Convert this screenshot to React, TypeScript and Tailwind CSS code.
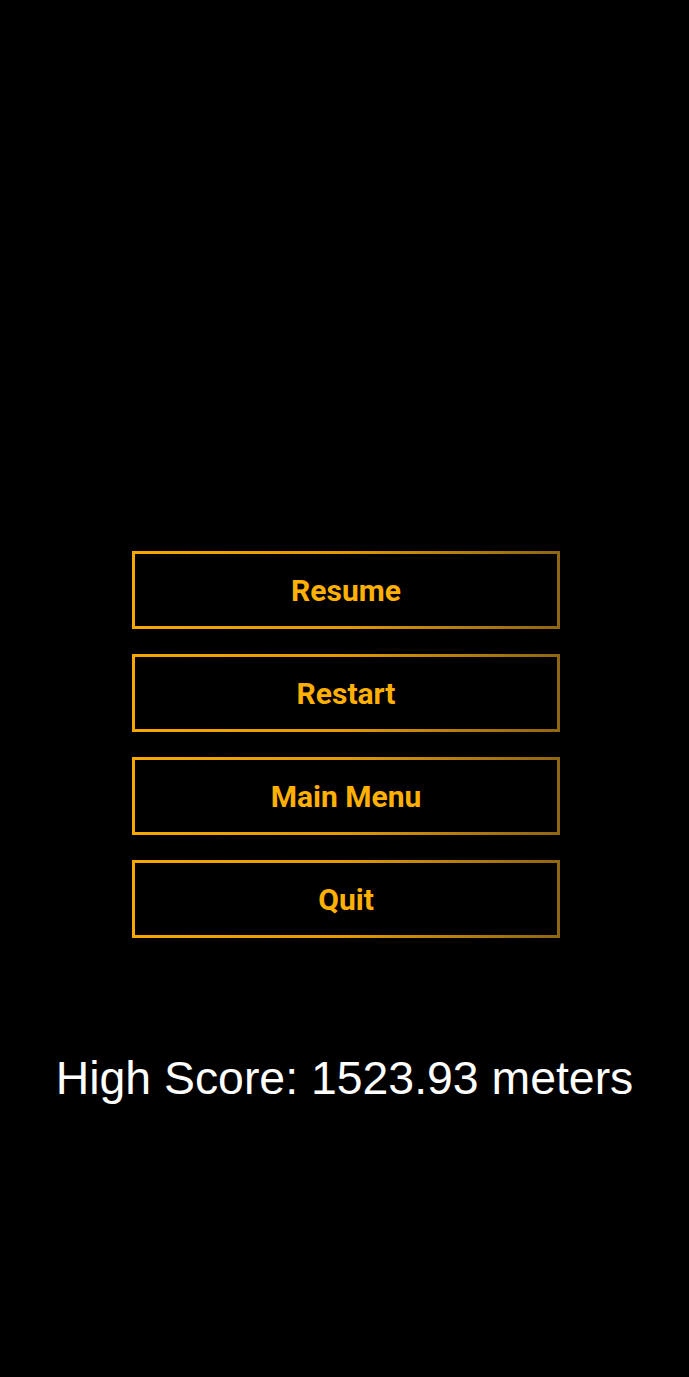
const items = ["Resume", "Restart", "Main Menu", "Quit"];

const MenuButton = ({ label }: { label: string }) => (
  <div className="w-[428px] h-[78px] p-[3px] bg-gradient-to-r from-[#f7a800] via-[#e39a00] to-[#8f6612]">
    <button className="w-full h-full bg-black flex items-center justify-center text-[30px] font-bold text-[#ffb000] [font-family:Roboto,sans-serif]">
      {label}
    </button>
  </div>
);

export default function App() {
  return (
    <div className="min-h-[1377px] w-full bg-black flex flex-col items-center pt-[551px]">
      <div className="flex flex-col gap-[25px] ml-[3px]">
        {items.map((item) => (
          <MenuButton key={item} label={item} />
        ))}
      </div>
      <p className="mt-[117px] text-white text-[46.4px] leading-none [font-family:'Liberation_Sans',Arial,sans-serif]">
        High Score: 1523.93 meters
      </p>
    </div>
  );
}
